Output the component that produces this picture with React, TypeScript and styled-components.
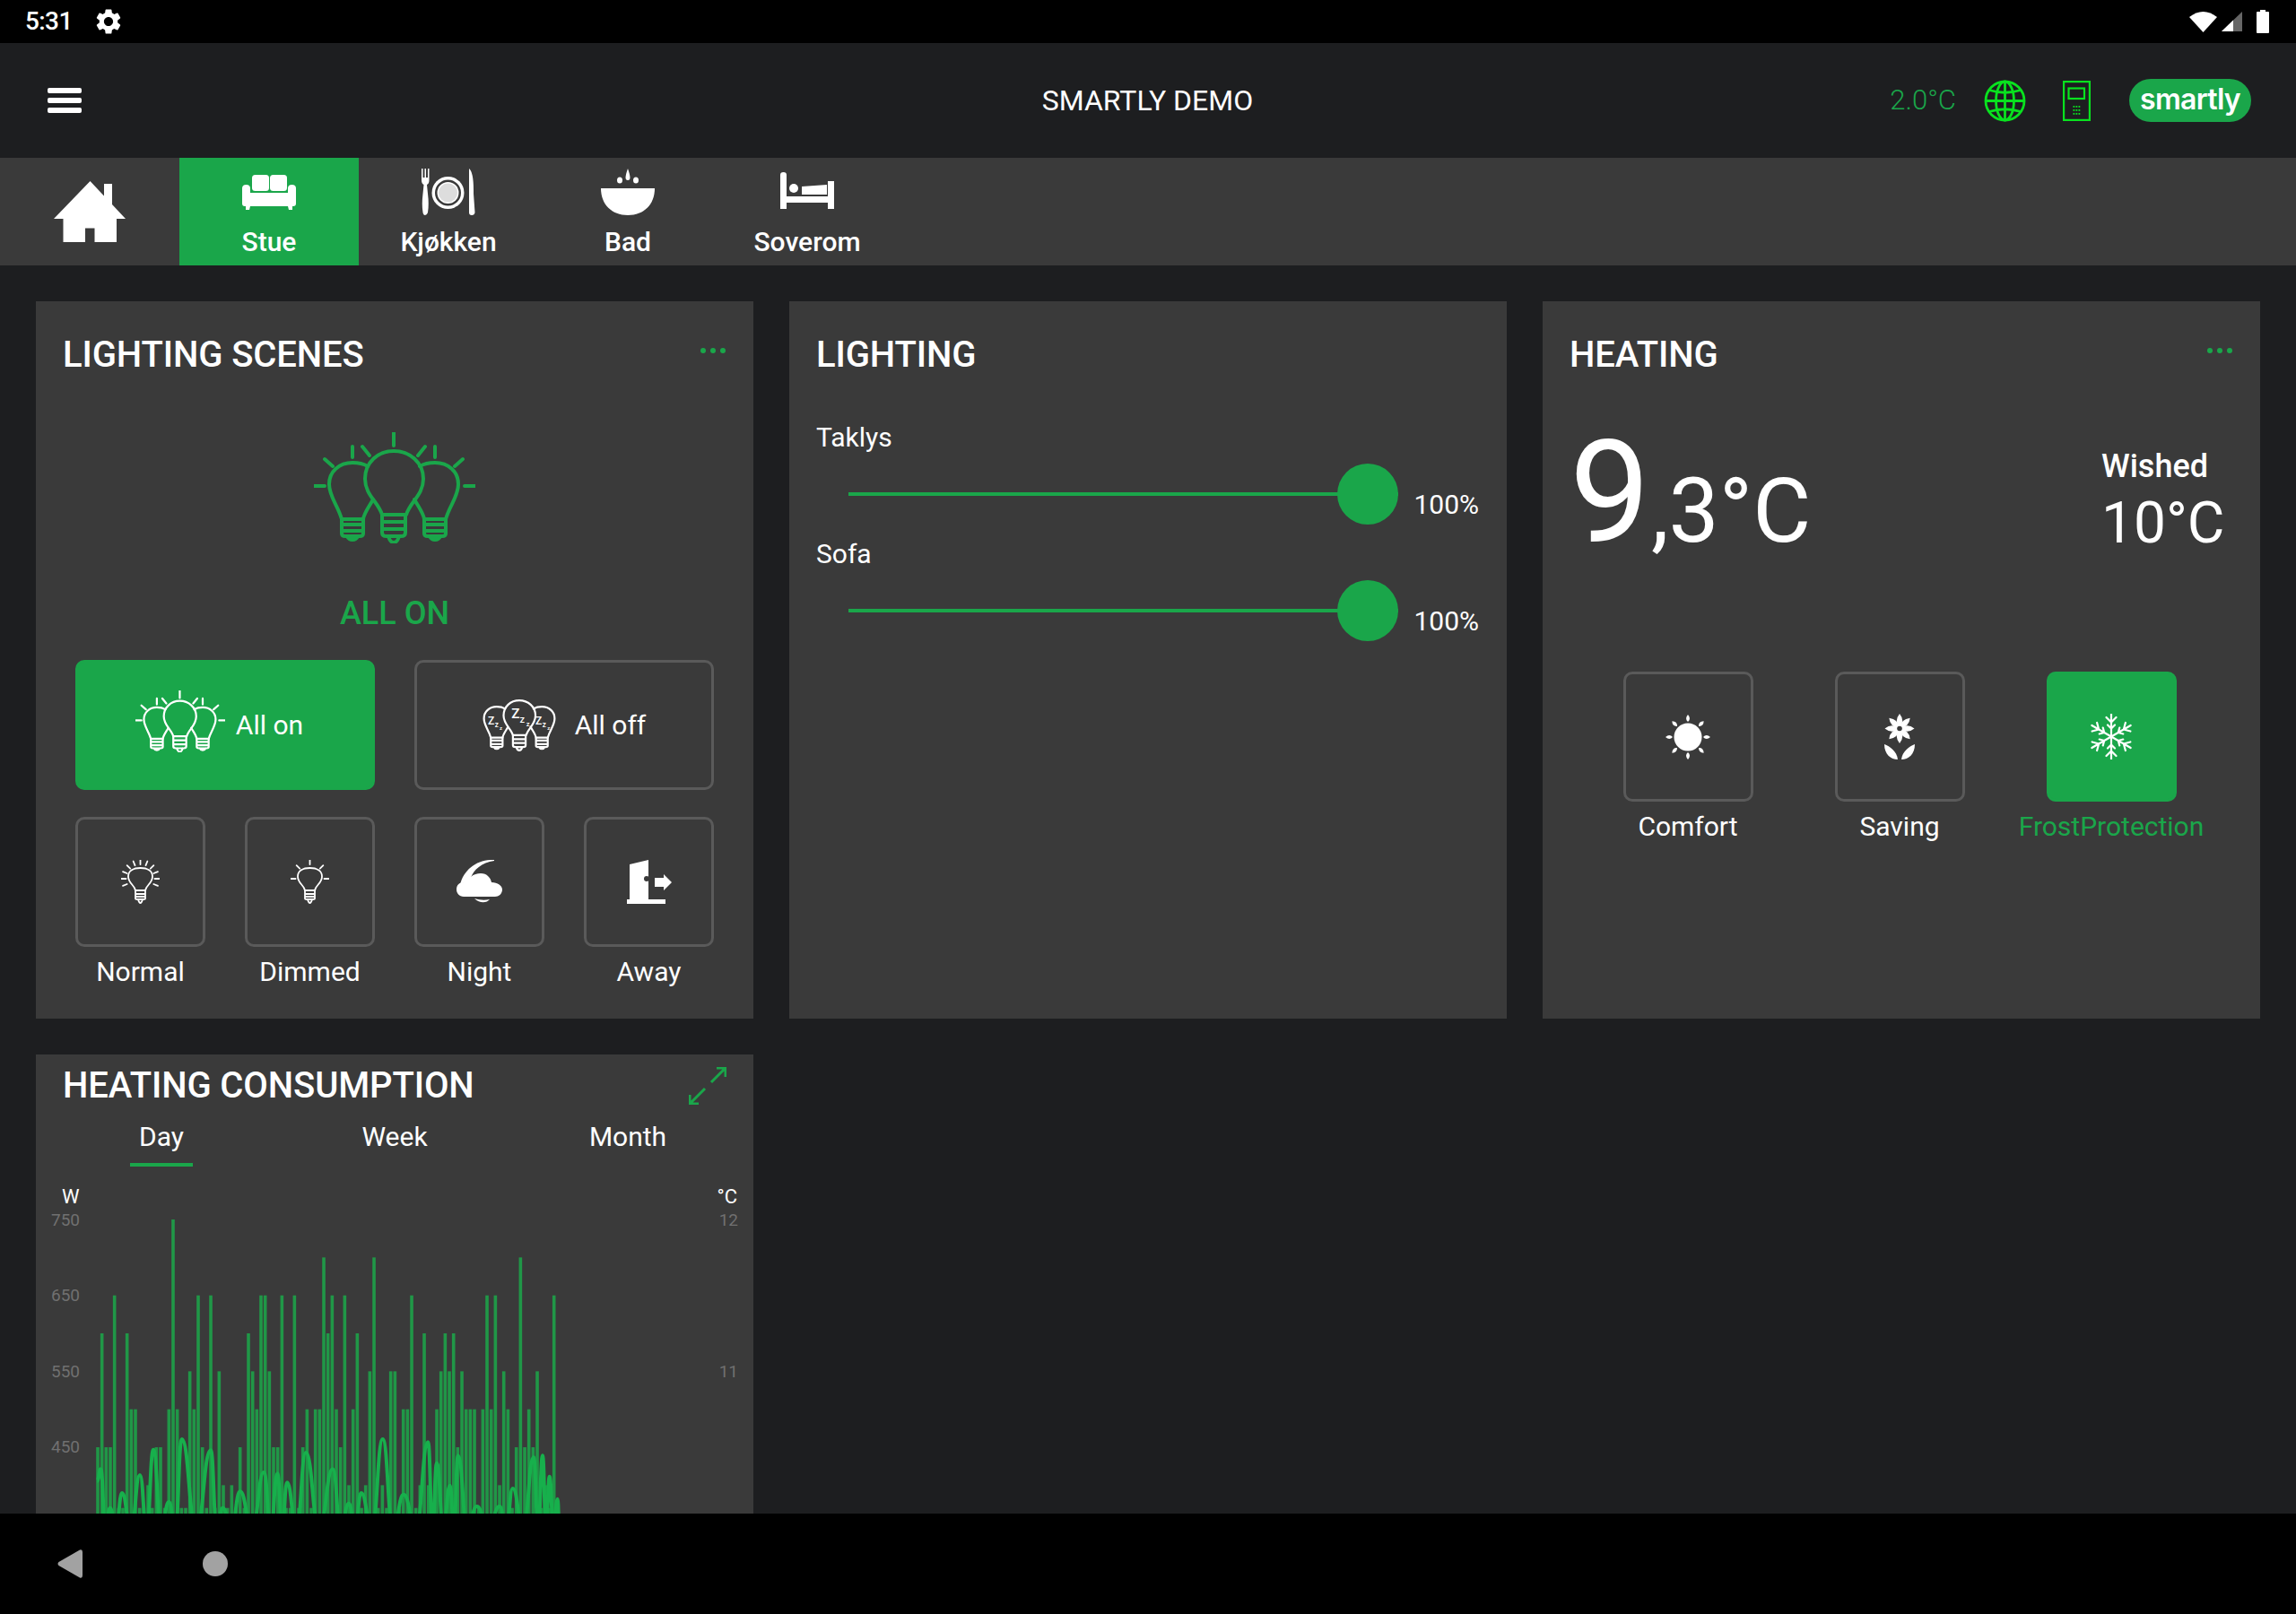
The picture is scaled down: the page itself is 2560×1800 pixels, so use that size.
import React from "react";
import styled, { createGlobalStyle } from "styled-components";
import { MdSettings } from "react-icons/md";

const GREEN = "#1aa64a";
const CARD = "#3a3a3a";
const PAGE = "#1d1e20";
const LINE = "#5a5a5a";

const Global = createGlobalStyle`
  html, body { margin: 0; padding: 0; background: ${PAGE}; }
  * { box-sizing: border-box; }
`;

const Screen = styled.div`
  width: 2560px; height: 1800px; display: flex; flex-direction: column; overflow: hidden;
  background: ${PAGE}; color: #fff; font-family: Roboto, "Liberation Sans", sans-serif;
`;
const StatusBar = styled.div`
  height: 48px; flex: none; background: #000; display: flex; align-items: center; padding: 0 30px 0 28px;
`;
const Clock = styled.span`font-size: 28px; font-weight: 500; line-height: 48px; width: 76px; letter-spacing: -0.6px;`;
const StatusRight = styled.div`margin-left: auto; display: flex; align-items: center;`;
const Icon = styled.svg<{ $w: number; $h: number; $ml?: number; $mb?: number }>`
  width: ${(p) => p.$w}px; height: ${(p) => p.$h}px; margin-left: ${(p) => p.$ml ?? 0}px; margin-bottom: ${(p) => p.$mb ?? 0}px; flex: none; display: block;
`;
const TopBar = styled.header`
  height: 128px; flex: none; display: grid; grid-template-columns: 1fr auto 1fr; align-items: center; padding: 0 50px;
`;
const TopTitle = styled.div`font-size: 32px; font-weight: 400; line-height: 40px; margin-left: -1px;`;
const TopRight = styled.div`display: flex; align-items: center; justify-content: flex-end;`;
const Outside = styled.span`font-size: 31px; font-weight: 300; color: ${GREEN}; line-height: 40px;`;
const Logo = styled.div`
  width: 136px; height: 48px; margin-left: 43px; border-radius: 24px; background: ${GREEN}; display: flex; align-items: center; justify-content: center;
  font-family: Inter, sans-serif; font-size: 32px; font-weight: 600; letter-spacing: -0.7px; padding-bottom: 3px;
`;
const RoomBar = styled.nav`height: 120px; flex: none; background: ${CARD}; display: flex;`;
const Room = styled.div<{ $active?: boolean }>`
  width: 200px; height: 120px; padding-top: 12px; display: flex; flex-direction: column; align-items: center;
  background: ${(p) => (p.$active ? GREEN : "transparent")};
`;
const HomeRoom = styled(Room)`padding-top: 0; justify-content: center;`;
const RoomIcon = styled.div<{ $up?: number }>`
  height: 52px; display: flex; align-items: center; justify-content: center; padding-bottom: ${(p) => p.$up ?? 0}px;
`;
const RoomName = styled.div`font-size: 30px; font-weight: 500; line-height: 36px; margin-top: 12px;`;

const Main = styled.main`
  flex: 1; min-height: 0; overflow: hidden; padding: 40px; display: grid; grid-template-columns: repeat(3, 800px); grid-auto-rows: 800px; gap: 40px;
`;
const Card = styled.section`background: ${CARD}; padding-top: 36px; display: flex; flex-direction: column;`;
const CardHead = styled.div`display: flex; justify-content: space-between; align-items: flex-start; padding: 0 30px;`;
const CardTitle = styled.h2`margin: 0; font-size: 40px; font-weight: 500; line-height: 48px; letter-spacing: -0.12px;`;
const Dots = styled.div`display: flex; gap: 5px; margin-top: 16px; margin-right: 1px;`;
const Dot = styled.i`width: 6px; height: 6px; border-radius: 50%; background: ${GREEN};`;

const Center = styled.div<{ $mt: number }>`display: flex; justify-content: center; margin-top: ${(p) => p.$mt}px;`;
const SceneState = styled.div`font-size: 36px; font-weight: 500; line-height: 44px; color: ${GREEN}; text-align: center; margin-top: 56px;`;
const SceneGrid = styled.div`display: grid; grid-template-columns: repeat(4, 145px); gap: 30px 44px; padding: 0 44px; margin-top: 30px;`;
const Tile = styled.div<{ $active?: boolean }>`
  height: 145px; border-radius: 10px; display: flex; align-items: center; justify-content: center;
  border: 3px solid ${(p) => (p.$active ? GREEN : LINE)}; background: ${(p) => (p.$active ? GREEN : "transparent")};
`;
const WideTile = styled(Tile)<{ $shift?: number }>`
  grid-column: span 2; font-size: 30px; line-height: 36px; padding-right: ${(p) => p.$shift ?? 0}px;
`;
const WideText = styled.span<{ $ml: number }>`margin-left: ${(p) => p.$ml}px;`;
const TileLabel = styled.div<{ $active?: boolean }>`
  font-size: 30px; line-height: 36px; margin-top: 10px; text-align: center; white-space: nowrap; color: ${(p) => (p.$active ? GREEN : "#fff")};
`;

const DimmerList = styled.div`margin-top: 50px; padding: 0 31px 0 30px;`;
const Dimmer = styled.div`height: 130px;`;
const DimmerName = styled.div`font-size: 30px; line-height: 36px;`;
const DimmerRow = styled.div`display: flex; margin-top: 11px; padding-left: 36px;`;
const Track = styled.div`flex: 1; height: 68px; position: relative; display: flex; align-items: center;`;
const TrackLine = styled.div`width: 100%; height: 4px; background: ${GREEN};`;
const Thumb = styled.div`position: absolute; right: 0; top: 0; width: 68px; height: 68px; border-radius: 50%; background: ${GREEN};`;
const DimmerValue = styled.div`font-size: 30px; line-height: 36px; margin: 28px 0 0 17px;`;

const Reading = styled.div`display: flex; align-items: flex-start; justify-content: space-between; padding: 0 41px 0 30px; margin-top: 50px; height: 160px;`;
const Temp = styled.div`display: flex; align-items: baseline;`;
const TempBig = styled.span`font-size: 160px; line-height: 160px; font-weight: 400;`;
const TempSmall = styled.span`font-size: 100px; line-height: 100px; font-weight: 400; margin-left: 1px;`;
const Wished = styled.div`margin-top: 28px; width: 136px;`;
const WishedLabel = styled.div`font-size: 36px; font-weight: 500; line-height: 44px;`;
const WishedValue = styled.div`font-size: 64px; font-weight: 400; line-height: 72px; margin-top: 6px; white-space: nowrap;`;
const Modes = styled.div`display: grid; grid-template-columns: repeat(3, 236px); justify-content: center; margin-top: 119px; padding-right: 4px;`;
const Mode = styled.div`display: flex; flex-direction: column; align-items: center;`;
const ModeTile = styled(Tile)`width: 145px;`;

const ChartCard = styled(Card)`padding-top: 11px;`;
const Expand = styled.div`margin-top: 3px;`;
const Periods = styled.div`display: grid; grid-template-columns: repeat(3, 1fr); padding: 0 10px; margin-top: 15px;`;
const Period = styled.div`display: flex; flex-direction: column; align-items: center; font-size: 30px; line-height: 36px;`;
const Underline = styled.div<{ $on?: boolean }>`width: 70px; height: 4px; margin-top: 11px; background: ${(p) => (p.$on ? GREEN : "transparent")};`;
const ChartSvg = styled.svg`display: block; width: 800px; height: 400px; margin-top: 19px; flex: none; font-family: Roboto, sans-serif;`;

const NavBar = styled.div`height: 112px; flex: none; background: #000; display: flex; align-items: center; padding-left: 64px;`;
const NavHome = styled.div`width: 28px; height: 28px; border-radius: 50%; background: #a2a2a2; margin-left: 134px;`;

/* ---------- drawings ---------- */
const Rays = () => (
  <g>
    <path d="M89 0V15M54 16L62 26M124 16L116 26M43 16V28M135 16V28M12 30L21 38M166 30L157 38M0 60H12M168 60H180" />
  </g>
);
const BulbTrio = ({ zzz }: { zzz?: boolean }) => (
  <g fill="none" stroke="currentColor" strokeWidth={4} strokeLinecap="round" strokeLinejoin="round">
    <path d="M76 92C72 78 57 70 57 52C57 34 71 21 89 21C107 21 122 34 122 52C122 70 107 78 103 92" />
    <path d="M76 92H102V112Q102 116 97 116H81Q76 116 76 112ZM76 100H102M76 108H102M83 116Q85 123 89 123Q93 123 95 116" />
    {[0, 1].map((m) => (
      <g key={m} transform={m ? "translate(178 0) scale(-1 1)" : undefined}>
        <path d="M60 38C55 35 50 34 43 34C28 34 17 44 17 58C17 72 27 82 31 97M66 75C61 84 56 90 55 97" />
        <path d="M31 97H55V113Q55 116 51 116H35Q31 116 31 113ZM31 103H55M31 110H55M37 116Q39 120 43 120Q47 120 49 116" />
      </g>
    ))}
    {zzz && (
      <g fill="currentColor" stroke="none" fontFamily="Roboto, sans-serif" fontWeight={500}>
        <text x="73" y="58" fontSize="28">Z</text>
        <text x="90" y="66" fontSize="20">z</text>
        <text x="103" y="74" fontSize="14">z</text>
        <text x="25" y="70" fontSize="22">Z</text>
        <text x="39" y="76" fontSize="15">z</text>
        <text x="49" y="82" fontSize="11">z</text>
        <text x="122" y="70" fontSize="22">Z</text>
        <text x="136" y="76" fontSize="15">z</text>
        <text x="146" y="82" fontSize="11">z</text>
      </g>
    )}
  </g>
);
const BulbsOn = ({ w, h, color, mb }: { w: number; h: number; color: string; mb?: number }) => (
  <Icon $w={w} $h={h} $mb={mb} viewBox="0 0 180 124" style={{ color }}>
    <BulbTrio />
    <g fill="none" stroke="currentColor" strokeWidth={4} strokeLinecap="round"><Rays /></g>
  </Icon>
);
const BulbsOff = () => (
  <Icon $w={82} $h={58} viewBox="15 19 148 106" color="#fff"><BulbTrio zzz /></Icon>
);
const SingleBulb = ({ angles, r1, r2 }: { angles: number[]; r1: number; r2: number }) => (
  <Icon $w={43} $h={49} viewBox="0 0 43 49" fill="none" stroke="#fff" strokeWidth={1.8} strokeLinecap="round" strokeLinejoin="round">
    <path d="M16 33C15 27 8 25 8 17.500C8 11 14 8 21.500 8C29 8 35 11 35 17.500C35 25 28 27 27 33Z" transform="translate(0 1)" />
    <path d="M16 34H27V43Q27 44 25 44H18Q16 44 16 43ZM16 38H27M16 41H27M19 44Q20 48 21.500 48Q23 48 24 44" />
    {angles.map((a) => {
      const t = (a * Math.PI) / 180;
      return <line key={a} x1={21.5 + r1 * Math.sin(t)} y1={21 - r1 * Math.cos(t)} x2={21.5 + r2 * Math.sin(t)} y2={21 - r2 * Math.cos(t)} />;
    })}
  </Icon>
);
const NightIcon = () => (
  <Icon $w={51} $h={49} viewBox="0 0 51 49" fill="#fff">
    <path d="M42 0C24 -1 8 10 4 28L16 20C19 11 28 3 42 1Z" />
    <path d="M8 41C3 41 0 37 0 33C0 28 3 25 8 25C9 21 12 19 16 19C19 16 23 15 27 15C34 15 38 20 39 25C46 25 51 29 51 33C51 38 47 41 43 41Z" />
    <path d="M20 43C26 45 32 45 37 44C34 48 26 49 20 43Z" />
  </Icon>
);
const AwayIcon = () => (
  <Icon $w={50} $h={49} viewBox="0 0 50 49" fill="#fff">
    <path d="M3 5L24 0V44H43V49H0V44H3Z" />
    <circle cx="22" cy="21" r="3" fill={CARD} />
    <path d="M31 20H41V16L50 25L41 34V30H31Z" />
  </Icon>
);
const SunIcon = () => (
  <Icon $w={50} $h={50} viewBox="0 0 50 50" fill="#fff">
    <ellipse cx="25" cy="25" rx="15.500" ry="15.500" />
    {[0, 45, 90, 135, 180, 225, 270, 315].map((a) => (
      <path key={a} transform={`rotate(${a} 25 25)`} d="M25 0Q29 4.500 25 8Q21 4.500 25 0Z" />
    ))}
  </Icon>
);
const FlowerIcon = () => (
  <Icon $w={36} $h={51} viewBox="0 0 36 51" fill="#fff">
    {[0, 45, 90, 135, 180, 225, 270, 315].map((a) => (
      <path key={a} transform={`rotate(${a} 18 16.500)`} d="M18 0Q24.500 8 18 16.500Q11.500 8 18 0Z" />
    ))}
    <circle cx="18" cy="16.500" r="6" />
    <circle cx="18" cy="16.500" r="2.800" fill={CARD} />
    <path d="M1 34C7 36 15 42 16 51C8 51 1 45 1 34Z" />
    <path d="M35 34C29 36 21 42 20 51C28 51 35 45 35 34Z" />
  </Icon>
);
const SnowIcon = () => (
  <Icon $w={46} $h={51} viewBox="0 0 46 51" fill="none" stroke="#fff" strokeWidth={2.200} strokeLinecap="round" strokeLinejoin="round">
    {[0, 60, 120, 180, 240, 300].map((a) => (
      <path key={a} transform={`rotate(${a} 23 25.500)`} d="M23 25.500V0.500M17.500 4L23 9.500L28.500 4M19 12.500L23 16.500L27 12.500" />
    ))}
  </Icon>
);
const Globe = () => (
  <Icon $w={47} $h={47} $ml={31} viewBox="0 0 47 47" fill="none" stroke="#09e21f" strokeWidth={2.800}>
    <circle cx="23.500" cy="23.500" r="21.500" />
    <ellipse cx="23.500" cy="23.500" rx="10" ry="21.500" />
    <path d="M23.500 2V45M2 23.500H45M6 11.500Q23.500 17 41 11.500M6 35.500Q23.500 30 41 35.500" />
  </Icon>
);
const Intercom = () => (
  <Icon $w={31} $h={45} $ml={41} viewBox="0 0 31 45" fill="none" stroke="#09e21f" strokeWidth={2.200}>
    <rect x="1.100" y="1.100" width="28.800" height="42.800" />
    <rect x="6.500" y="8.500" width="17.500" height="11.500" />
    <g fill="#09e21f" stroke="none">
      {[0, 1, 2].flatMap((r) => [0, 1, 2].map((c) => <rect key={`${r}${c}`} x={11.500 + c * 3} y={28 + r * 4} width="1.800" height="1.800" />))}
    </g>
  </Icon>
);

/* chart data: index of a bar -> value (370 = stub at the bottom) */
const BARS = [
  450, 600, 450, 450, 650, 370, 370, 600, 500, 500, 370, 370, 400, 370, 450, 450, 370, 500, 750, 500, 370, 370, 550, 500, 650, 450, 370, 650, 370, 550,
  400, 370, 400, 370, 450, 370, 600, 550, 500, 650, 650, 550, 450, 450, 650, 370, 370, 650, 370, 450, 500, 370, 500, 500, 700, 600, 650, 500, 450, 650,
  400, 500, 600, 370, 400, 550, 700, 370, 400, 370, 550, 550, 370, 500, 500, 650, 370, 400, 600, 400, 370, 500, 550, 600, 550, 600, 450, 550, 500, 500,
  500, 370, 500, 650, 500, 650, 400, 550, 500, 370, 450, 700, 450, 500, 450, 550, 370, 400, 370, 650,
];
const Z7: [number, number][] = [
  [217, 895], [248, 1025], [288, 975], [348, 915], [393, 830], [445, 1005], [488, 795], [585, 832], [625, 1025], [683, 970], [763, 905], [808, 910], [840, 940], [903, 840], [993, 895], [1047, 1010], [1088, 975], [1160, 795],
];
const Z8: [number, number][] = [
  [412, 805], [441, 875], [485, 950], [512, 850], [575, 1020], [651, 1020], [695, 960], [765, 855], [795, 850], [818, 920], [845, 995],
];
const PEAKS: [number, number][] = [
  ...Z7.map(([x, y]) => [x / 3, 20 + y / 3] as [number, number]),
  [340 - 40 + 330 / 3, 20 + 980 / 3],
  ...Z8.map(([x, y]) => [300 + x / 3, 20 + y / 3] as [number, number]),
];
const curvePath = () => {
  let d = `M${(205 / 3).toFixed(1)} ${(20 + 935 / 3).toFixed(1)}`;
  let px = 205 / 3;
  let py = 20 + 935 / 3;
  const seg = (x: number, y: number) => {
    const m = (px + x) / 2;
    d += `C${m.toFixed(1)} ${py.toFixed(1)} ${m.toFixed(1)} ${y.toFixed(1)} ${x.toFixed(1)} ${y.toFixed(1)}`;
    px = x;
    py = y;
  };
  PEAKS.forEach(([x, y], i) => {
    if (i > 0) seg((px + x) / 2, 385);
    seg(x, y);
  });
  seg(px + 2, 385);
  return d;
};
const valueY = (v: number) => 40 + (750 - v) * 0.8467;

const Chart = () => (
  <ChartSvg viewBox="0 0 800 400">
    <text x="29" y="22" fontSize="22" fill="#fff">W</text>
    <text x="782" y="22" fontSize="22" fill="#fff" textAnchor="end">°C</text>
    {[[750, 47], [650, 131], [550, 216], [450, 300]].map(([v, y]) => (
      <text key={v} x="17" y={y} fontSize="19" fill="#707070">{v}</text>
    ))}
    {[[12, 47], [11, 216]].map(([v, y]) => (
      <text key={v} x="783" y={y} fontSize="19" fill="#707070" textAnchor="end">{v}</text>
    ))}
    {BARS.map((v, i) => (
      <rect key={i} x={69 + 4.667 * i - 1.8} y={valueY(v)} width={3.6} height={400 - valueY(v)} fill="#209747" />
    ))}
    <path d={curvePath()} fill="none" stroke="#17b04c" strokeWidth={4} />
  </ChartSvg>
);

export default function App() {
  return (
    <Screen>
      <Global />
      <StatusBar>
        <Clock>5:31</Clock>
        <MdSettings size={34} color="#fff" />
        <StatusRight>
          <Icon $w={31} $h={23} viewBox="0 0 31 23" fill="#fff"><path d="M0 6Q15.500 -6 31 6L15.500 23Z" /></Icon>
          <Icon $w={23} $h={22} $ml={5} viewBox="0 0 23 22">
            <path d="M0 22L23 0V22Z" fill="#666" />
            <path d="M0 22L13 9.600V22Z" fill="#fff" />
          </Icon>
          <Icon $w={14} $h={26} $ml={16} viewBox="0 0 14 26" fill="#fff"><path d="M4 0H10V2H13Q14 2 14 3V25Q14 26 13 26H1Q0 26 0 25V3Q0 2 1 2H4Z" /></Icon>
        </StatusRight>
      </StatusBar>

      <TopBar>
        <Icon $w={38} $h={28} $ml={3} viewBox="0 0 38 28" fill="#fff">
          <rect width="38" height="6" rx="2" />
          <rect y="11" width="38" height="6" rx="2" />
          <rect y="22" width="38" height="6" rx="2" />
        </Icon>
        <TopTitle>SMARTLY DEMO</TopTitle>
        <TopRight>
          <Outside>2.0°C</Outside>
          <Globe />
          <Intercom />
          <Logo>smartly</Logo>
        </TopRight>
      </TopBar>

      <RoomBar>
        <HomeRoom>
          <Icon $w={80} $h={68} viewBox="0 0 80 68" fill="#fff">
            <path d="M40.500 0L56 16.500V3H65V26L80 42H70V68H45.500V52.500H35V68H10.500V42H0Z" />
          </Icon>
        </HomeRoom>
        <Room $active>
          <RoomIcon>
            <Icon $w={60} $h={39} viewBox="0 0 60 39" fill="#fff">
              <rect x="11" y="0" width="19" height="18" rx="3.500" />
              <rect x="31" y="0" width="19" height="18" rx="3.500" />
              <path d="M0 15Q0 11 4.500 11Q9 11 9 15V20H51V15Q51 11 55.500 11Q60 11 60 15V32Q60 35 57 35H56V39H52L51 35H9L8 39H4V35H3Q0 35 0 32Z" />
            </Icon>
          </RoomIcon>
          <RoomName>Stue</RoomName>
        </Room>
        <Room>
          <RoomIcon>
            <Icon $w={60} $h={52} viewBox="0 0 60 52" fill="#fff">
              <path d="M0 0H1.500V10H3.500V0H5V10H7V0H8.500V13Q8.500 17 6 18L7 28Q8.500 40 7 49Q6 52 4 52Q2 52 1.500 49Q0 40 1.500 28L2.500 18Q0 17 0 13Z" />
              <circle cx="29.500" cy="27" r="18" />
              <circle cx="29.500" cy="27" r="14.500" fill={CARD} />
              <circle cx="29.500" cy="27" r="12" />
              <circle cx="29.500" cy="27" r="10.500" fill="#ddd" />
              <path d="M53 0Q58 4 58 24V28L59.500 49Q59 52 56 52Q53 52 53 49Z" />
            </Icon>
          </RoomIcon>
          <RoomName>Kjøkken</RoomName>
        </Room>
        <Room>
          <RoomIcon>
            <Icon $w={60} $h={52} viewBox="0 0 60 52" fill="#fff">
              <path d="M0 22H60C60 40 48 52 30 52C12 52 0 40 0 22Z" />
              <path d="M30 0C31.500 4 32.500 8 32.500 10Q32.500 13 30 13Q27.500 13 27.500 10C27.500 8 28.500 4 30 0Z" />
              <ellipse cx="21" cy="13" rx="3" ry="3.500" />
              <ellipse cx="39" cy="13" rx="3" ry="3.500" />
            </Icon>
          </RoomIcon>
          <RoomName>Bad</RoomName>
        </Room>
        <Room>
          <RoomIcon $up={3}>
            <Icon $w={60} $h={41} viewBox="0 0 60 41" fill="#fff">
              <path d="M0 3Q0 0 3.500 0Q7 0 7 3V27H53V10H60V41H53V34H7V41H0Z" />
              <circle cx="15" cy="18" r="5" />
              <path d="M24 16L52 14V25H24Z" />
            </Icon>
          </RoomIcon>
          <RoomName>Soverom</RoomName>
        </Room>
      </RoomBar>

      <Main>
        <Card>
          <CardHead>
            <CardTitle>LIGHTING SCENES</CardTitle>
            <Dots><Dot /><Dot /><Dot /></Dots>
          </CardHead>
          <Center $mt={62}><BulbsOn w={180} h={124} color={GREEN} /></Center>
          <SceneState>ALL ON</SceneState>
          <SceneGrid>
            <WideTile $active $shift={13}>
              <BulbsOn w={100} h={69} color="#fff" mb={8} />
              <WideText $ml={12}>All on</WideText>
            </WideTile>
            <WideTile>
              <BulbsOff />
              <WideText $ml={21}>All off</WideText>
            </WideTile>
            <div>
              <Tile><SingleBulb angles={[0, 22, -22, 45, -45, 68, -68, 90, -90, 112, -112]} r1={16} r2={21} /></Tile>
              <TileLabel>Normal</TileLabel>
            </div>
            <div>
              <Tile><SingleBulb angles={[0, 45, -45, 90, -90]} r1={16} r2={21} /></Tile>
              <TileLabel>Dimmed</TileLabel>
            </div>
            <div>
              <Tile><NightIcon /></Tile>
              <TileLabel>Night</TileLabel>
            </div>
            <div>
              <Tile><AwayIcon /></Tile>
              <TileLabel>Away</TileLabel>
            </div>
          </SceneGrid>
        </Card>

        <Card>
          <CardHead><CardTitle>LIGHTING</CardTitle></CardHead>
          <DimmerList>
            {["Taklys", "Sofa"].map((name) => (
              <Dimmer key={name}>
                <DimmerName>{name}</DimmerName>
                <DimmerRow>
                  <Track><TrackLine /><Thumb /></Track>
                  <DimmerValue>100%</DimmerValue>
                </DimmerRow>
              </Dimmer>
            ))}
          </DimmerList>
        </Card>

        <Card>
          <CardHead>
            <CardTitle>HEATING</CardTitle>
            <Dots><Dot /><Dot /><Dot /></Dots>
          </CardHead>
          <Reading>
            <Temp><TempBig>9</TempBig><TempSmall>,3°C</TempSmall></Temp>
            <Wished>
              <WishedLabel>Wished</WishedLabel>
              <WishedValue>10°C</WishedValue>
            </Wished>
          </Reading>
          <Modes>
            <Mode><ModeTile><SunIcon /></ModeTile><TileLabel>Comfort</TileLabel></Mode>
            <Mode><ModeTile><FlowerIcon /></ModeTile><TileLabel>Saving</TileLabel></Mode>
            <Mode><ModeTile $active><SnowIcon /></ModeTile><TileLabel $active>FrostProtection</TileLabel></Mode>
          </Modes>
        </Card>

        <ChartCard>
          <CardHead>
            <CardTitle>HEATING CONSUMPTION</CardTitle>
            <Expand>
              <Icon $w={42} $h={42} viewBox="0 0 42 42" fill="none" stroke={GREEN} strokeWidth={3}>
                <path d="M41 1L25 17M18 24L1 41M31 1H41V11M1 31V41H11" />
              </Icon>
            </Expand>
          </CardHead>
          <Periods>
            <Period>Day<Underline $on /></Period>
            <Period>Week<Underline /></Period>
            <Period>Month<Underline /></Period>
          </Periods>
          <Chart />
        </ChartCard>
      </Main>

      <NavBar>
        <Icon $w={28} $h={32} viewBox="0 0 28 32" fill="#a2a2a2">
          <path d="M25 0.500Q28 -0.500 28 3V29Q28 32.500 25 31.500L1.500 18Q-0.500 16 1.500 14Z" />
        </Icon>
        <NavHome />
      </NavBar>
    </Screen>
  );
}
